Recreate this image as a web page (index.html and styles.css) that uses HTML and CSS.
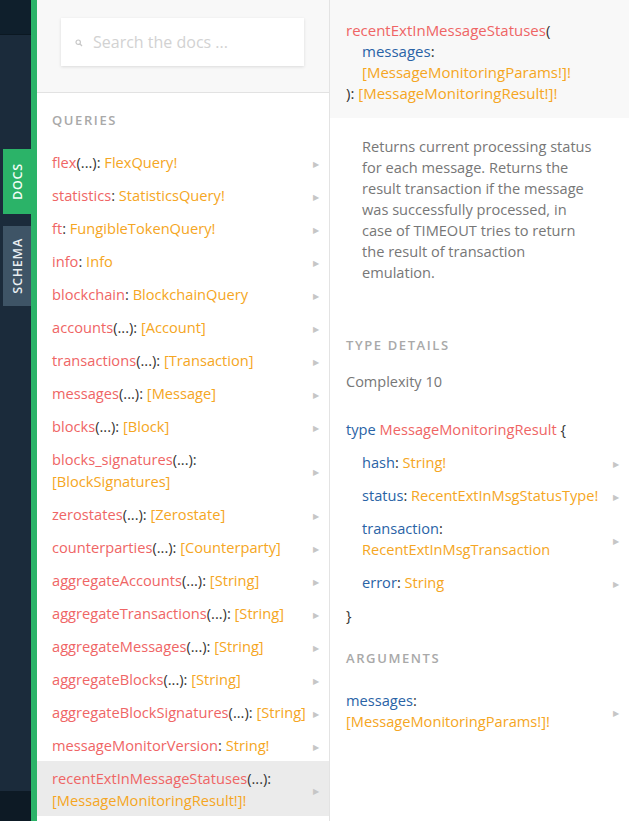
FILE: index.html
```html
<!DOCTYPE html>
<html>
<head>
<meta charset="utf-8">
<link rel="stylesheet" href="styles.css">
</head>
<body>
<div class="app">
  <aside class="rail">
    <div class="rail-top"></div>
    <div class="rail-body">
      <div class="tab tab-docs"><span>DOCS</span></div>
      <div class="tab tab-schema"><span>SCHEMA</span></div>
    </div>
    <div class="rail-bottom"></div>
  </aside>
  <div class="accent"></div>
  <section class="list-panel">
    <div class="search-area">
      <div class="search-box">
        <svg class="search-icon" width="8" height="8" viewBox="0 0 8 8"><circle cx="3.2" cy="3.2" r="2.2" fill="none" stroke="#c8c8c8" stroke-width="1.2"/><path d="M4.8 4.8 L7 7" stroke="#c8c8c8" stroke-width="1.3"/></svg>
        <span class="placeholder">Search the docs ...</span>
      </div>
    </div>
    <div class="section-title">QUERIES</div>
    <ul class="fields">
      <li class="row"><span class="label"><span class="fn">flex</span><span class="p">(...): </span><span class="ty">FlexQuery!</span></span><span class="arrow">▶</span></li>
      <li class="row"><span class="label"><span class="fn">statistics</span><span class="p">: </span><span class="ty">StatisticsQuery!</span></span><span class="arrow">▶</span></li>
      <li class="row"><span class="label"><span class="fn">ft</span><span class="p">: </span><span class="ty">FungibleTokenQuery!</span></span><span class="arrow">▶</span></li>
      <li class="row"><span class="label"><span class="fn">info</span><span class="p">: </span><span class="ty">Info</span></span><span class="arrow">▶</span></li>
      <li class="row"><span class="label"><span class="fn">blockchain</span><span class="p">: </span><span class="ty">BlockchainQuery</span></span><span class="arrow">▶</span></li>
      <li class="row"><span class="label"><span class="fn">accounts</span><span class="p">(...): </span><span class="ty">[Account]</span></span><span class="arrow">▶</span></li>
      <li class="row"><span class="label"><span class="fn">transactions</span><span class="p">(...): </span><span class="ty">[Transaction]</span></span><span class="arrow">▶</span></li>
      <li class="row"><span class="label"><span class="fn">messages</span><span class="p">(...): </span><span class="ty">[Message]</span></span><span class="arrow">▶</span></li>
      <li class="row"><span class="label"><span class="fn">blocks</span><span class="p">(...): </span><span class="ty">[Block]</span></span><span class="arrow">▶</span></li>
      <li class="row"><span class="label"><span class="fn">blocks_signatures</span><span class="p">(...): </span><span class="ty">[BlockSignatures]</span></span><span class="arrow">▶</span></li>
      <li class="row"><span class="label"><span class="fn">zerostates</span><span class="p">(...): </span><span class="ty">[Zerostate]</span></span><span class="arrow">▶</span></li>
      <li class="row"><span class="label"><span class="fn">counterparties</span><span class="p">(...): </span><span class="ty">[Counterparty]</span></span><span class="arrow">▶</span></li>
      <li class="row"><span class="label"><span class="fn">aggregateAccounts</span><span class="p">(...): </span><span class="ty">[String]</span></span><span class="arrow">▶</span></li>
      <li class="row"><span class="label"><span class="fn">aggregateTransactions</span><span class="p">(...): </span><span class="ty">[String]</span></span><span class="arrow">▶</span></li>
      <li class="row"><span class="label"><span class="fn">aggregateMessages</span><span class="p">(...): </span><span class="ty">[String]</span></span><span class="arrow">▶</span></li>
      <li class="row"><span class="label"><span class="fn">aggregateBlocks</span><span class="p">(...): </span><span class="ty">[String]</span></span><span class="arrow">▶</span></li>
      <li class="row"><span class="label"><span class="fn">aggregateBlockSignatures</span><span class="p">(...): </span><span class="ty">[String]</span></span><span class="arrow">▶</span></li>
      <li class="row"><span class="label"><span class="fn">messageMonitorVersion</span><span class="p">: </span><span class="ty">String!</span></span><span class="arrow">▶</span></li>
      <li class="row active"><span class="label"><span class="fn">recentExtInMessageStatuses</span><span class="p">(...): </span><span class="ty">[MessageMonitoringResult!]!</span></span><span class="arrow">▶</span></li>
    </ul>
  </section>
  <section class="detail-panel">
    <div class="detail-head">
      <div><span class="fn">recentExtInMessageStatuses</span><span class="p">(</span></div>
      <div class="indent"><span class="arg">messages</span><span class="p">:</span></div>
      <div class="indent"><span class="ty">[MessageMonitoringParams!]!</span></div>
      <div><span class="p">): </span><span class="ty">[MessageMonitoringResult!]!</span></div>
    </div>
    <p class="description">Returns current processing status for each message. Returns the result transaction if the message was successfully processed, in case of TIMEOUT tries to return the result of transaction emulation.</p>
    <div class="section-title detail-title">TYPE DETAILS</div>
    <div class="complexity">Complexity 10</div>
    <div class="type-line"><span class="kw">type</span> <span class="fn">MessageMonitoringResult</span> <span class="p">{</span></div>
    <ul class="type-fields">
      <li class="row"><span class="label"><span class="arg">hash</span><span class="p">: </span><span class="ty">String!</span></span><span class="arrow">▶</span></li>
      <li class="row"><span class="label"><span class="arg">status</span><span class="p">: </span><span class="ty">RecentExtInMsgStatusType!</span></span><span class="arrow">▶</span></li>
      <li class="row"><span class="label"><span class="arg">transaction</span><span class="p">: </span><span class="ty">RecentExtInMsgTransaction</span></span><span class="arrow">▶</span></li>
      <li class="row"><span class="label"><span class="arg">error</span><span class="p">: </span><span class="ty">String</span></span><span class="arrow">▶</span></li>
    </ul>
    <div class="close-brace"><span class="p">}</span></div>
    <div class="section-title detail-title args-title">ARGUMENTS</div>
    <ul class="args">
      <li class="row"><span class="label"><span class="arg">messages</span><span class="p">: </span><span class="ty">[MessageMonitoringParams!]!</span></span><span class="arrow">▶</span></li>
    </ul>
  </section>
</div>
</body>
</html>
```
FILE: styles.css
```css
* { box-sizing: border-box; }
html, body {
  margin: 0;
  padding: 0;
  width: 629px;
  height: 821px;
  overflow: hidden;
  font-family: "Open Sans", "Liberation Sans", sans-serif;
  font-size: 14.65px;
  background: #fff;
}
ul { list-style: none; margin: 0; padding: 0; }
p { margin: 0; }

.app {
  display: flex;
  height: 821px;
}

/* left rail */
.rail {
  width: 31px;
  flex: none;
  display: flex;
  flex-direction: column;
  background: #1b2b3b;
}
.rail-top {
  height: 35px;
  background: #0f1f2c;
  border-bottom: 1px solid #0b1822;
}
.rail-body {
  flex: 1;
  padding-top: 114px;
  display: flex;
  flex-direction: column;
  align-items: flex-end;
  gap: 12px;
}
.rail-bottom {
  height: 30px;
  background: #0d1a25;
}
.tab {
  width: 28px;
  display: flex;
  align-items: center;
  justify-content: center;
  color: #fff;
  font-size: 12.5px;
  font-weight: 600;
  letter-spacing: 0.8px;
}
.tab span {
  writing-mode: vertical-rl;
  transform: rotate(180deg);
}
.tab-docs { height: 65px; background: #2bb368; color: #f4fff8; }
.tab-schema { height: 80px; background: #3e5466; color: #e8eef2; }

.accent {
  width: 6px;
  flex: none;
  background: #2bb368;
}

/* list panel */
.list-panel {
  width: 293px;
  flex: none;
  border-right: 1px solid #e3e3e3;
  background: #fff;
}
.search-area {
  height: 93px;
  background: #f8f8f8;
  border-bottom: 1px solid #e2e2e2;
  padding: 18px 25px 0 24px;
}
.search-box {
  height: 48px;
  background: #fff;
  box-shadow: 0 1px 3px rgba(0,0,0,0.12);
  display: flex;
  align-items: center;
  padding-left: 14px;
  gap: 10px;
}
.search-icon { margin-top: 1px; }
.placeholder {
  color: #d2d2d2;
  font-size: 16px;
}

.section-title {
  color: #a9a9a9;
  font-size: 13px;
  font-weight: 600;
  letter-spacing: 1.6px;
  line-height: 16px;
  padding: 19px 15px 0 15px;
}
.fields { padding-top: 17px; }

.row {
  display: flex;
  align-items: center;
  line-height: 22px;
  padding: 5.5px 10px 5.5px 15px;
}
.row .label { flex: 1; padding-right: 4px; }
.row .arrow {
  flex: none;
  color: #c6c6c6;
  font-size: 8px;
  line-height: 8px;
  margin-top: 4px;
}
.row.active { background: #ebebeb; }

.fn { color: #ef6565; }
.p { color: #333; }
.ty { color: #f5a623; }
.arg { color: #2a63a6; }
.kw { color: #2a63a6; }

/* detail panel */
.detail-panel {
  flex: 1;
  min-width: 0;
  background: #fff;
}
.detail-head {
  background: #f8f8f8;
  height: 118px;
  padding: 19.5px 16px 0 16px;
  line-height: 21px;
  font-size: 15px;
}
.indent { padding-left: 16px; }
.description {
  color: #777;
  font-size: 14.6px;
  line-height: 21px;
  padding: 17.5px 32px 0 32px;
}
.detail-title { padding: 54.5px 16px 0 16px; }
.complexity {
  color: #777;
  font-size: 14.5px;
  padding: 18px 16px 0 16px;
  line-height: 22px;
}
.type-line {
  padding: 25px 16px 0 16px;
  line-height: 22px;
}
.type-fields { padding-top: 5.5px; }
.type-fields .row { padding: 6px 10px 6px 32px; line-height: 21px; font-size: 14.6px; }
.close-brace {
  padding: 5px 16px 0 16px;
  line-height: 22px;
}
.args-title { padding-top: 24px; }
.args { padding-top: 18.5px; }
.args .row { padding: 6px 10px 6px 16px; line-height: 21px; }
```
